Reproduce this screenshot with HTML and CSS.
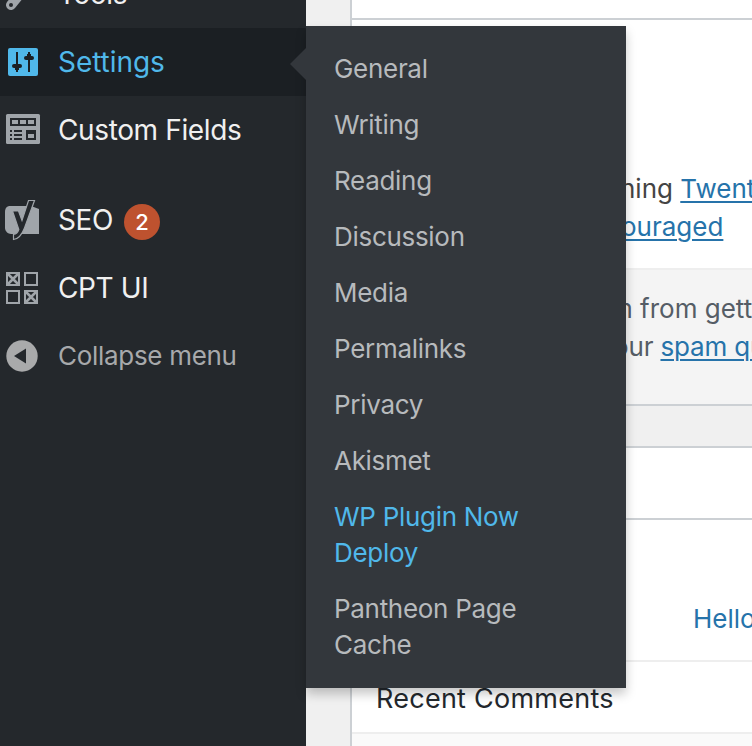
FILE: index.html
```html
<!DOCTYPE html>
<html lang="en">
<head>
<meta charset="utf-8">
<title>Dashboard</title>
<link rel="stylesheet" href="styles.css">
</head>
<body>
<div class="admin">
  <nav class="sidebar">
    <a class="item tools"><svg class="icon" viewBox="0 0 40 40"><path d="M7 28 L17 16 L28 18 L15 34 A5 5 0 1 1 7 28Z" fill="#a0a5aa"/><circle cx="11" cy="31" r="2" fill="#24282c"/></svg><span class="label">Tools</span></a>
    <a class="item current"><svg class="icon" viewBox="0 0 40 40"><rect x="8" y="6" width="30" height="28" rx="2" fill="#50b8ea"/><path d="M17 10V30M29 10V30" stroke="#1b1f23" stroke-width="2"/><rect x="12" y="22" width="10" height="4" rx="2" fill="#1b1f23"/><rect x="24" y="14" width="10" height="4" rx="2" fill="#1b1f23"/><path d="M15 25h4v3h-4zM27 12h4v3h-4z" fill="#1b1f23"/></svg><span class="label">Settings</span></a>
    <a class="item fields"><svg class="icon" viewBox="0 0 40 40"><rect x="6" y="4" width="34" height="30" rx="1.500" fill="#a0a5aa"/><path d="M10 8h26v8H10zM26 20h10v10H26zM10 20h2v2h-2zM10 24h2v2h-2zM10 28h2v2h-2zM14 20h8v2h-8zM14 24h8v2h-8zM14 28h8v2h-8z" fill="#24282c"/><path d="M12 10h6v4h-6zM20 10h6v4h-6zM28 10h6v4h-6zM28 24h6v4h-6z" fill="#a0a5aa"/></svg><span class="label">Custom Fields</span></a>
    <a class="item seo"><svg class="icon" viewBox="0 0 40 40"><path d="M10 6H31L39 9V34H11C8 34 5 31 5 28V12C5 8 7 6 10 6Z" fill="#a0a5aa"/><path d="M12.500 11H18.500L22 20.500L28.500 .5H34.500L24.500 28C21.800 35 19 39 13.500 39.500V34.500C16.500 34 18 32 18.800 29.500Z" fill="#24282c" stroke="#a0a5aa" stroke-width="1.200"/></svg><span class="label">SEO</span><span class="badge">2</span></a>
    <a class="item cpt"><svg class="icon" viewBox="0 0 40 40"><g fill="none" stroke="#a0a5aa" stroke-width="2"><path d="M7 5h12v12H7zM25 5h12v12H25zM7 23h12v12H7zM25 23h12v12H25z"/><path d="M8 6l10 10M18 6L8 16M26 24l10 10M36 24L26 34" stroke-width="2.600"/></g></svg><span class="label">CPT UI</span></a>
    <a class="item collapse"><svg class="icon" viewBox="0 0 40 40"><circle cx="22" cy="20" r="15.700" fill="#a9aaab"/><path d="M26 12.500V27.500L14 20Z" fill="#24282c"/></svg><span class="label">Collapse menu</span></a>
  </nav>

  <main class="content">
    <section class="panel glance">
      <header class="bar"></header>
      <div class="info">
        <p class="running">ning <a>Twenty Twenty</a></p>
        <p class="couraged"><a>ouraged</a></p>
      </div>
      <div class="spam">
        <p class="from">m from getting</p>
        <p class="queue">our <a>spam queue</a></p>
      </div>
    </section>
    <section class="panel activity">
      <header class="title"></header>
      <div class="recent"><a>Hello world!</a></div>
      <h3>Recent Comments</h3>
      <div class="comments"></div>
    </section>
  </main>

  <ul class="submenu">
    <li>General</li>
    <li>Writing</li>
    <li>Reading</li>
    <li>Discussion</li>
    <li>Media</li>
    <li>Permalinks</li>
    <li>Privacy</li>
    <li>Akismet</li>
    <li class="active">WP Plugin Now<br>Deploy</li>
    <li>Pantheon Page<br>Cache</li>
  </ul>
</div>
</body>
</html>
```
FILE: styles.css
```css
* { box-sizing: border-box; }
html, body { margin: 0; height: 746px; overflow: hidden; }
body { font-family: Inter, "Liberation Sans", sans-serif; background: #f0f0f0; }
p, h3, ul { margin: 0; padding: 0; }
.admin { position: relative; display: flex; width: 752px; height: 746px; overflow: hidden; }
.sidebar { flex: 0 0 306px; background: #24282c; color: #f0f0f0; }
.item { display: flex; align-items: center; height: 68px; font-size: 28px; letter-spacing: -.37px; white-space: nowrap; }
.icon { flex: 0 0 40px; width: 40px; height: 40px; margin-right: 18px; overflow: visible; }
.tools { margin-top: -40px; }
.current { background: #1b1f23; color: #50b8ea; letter-spacing: -.05px; }
.seo { margin-top: 22px; }
.collapse { color: #a7a9ab; font-size: 26px; letter-spacing: -.3px; }
.collapse .label { padding-bottom: 2px; }
.badge { width: 36px; height: 36px; margin: 4px 0 0 11px; border-radius: 18px; background: #be522f; color: #fff; font-size: 22px; font-weight: 500; line-height: 36px; letter-spacing: 0; text-align: center; }
.content { flex: 1; min-width: 0; padding-left: 44px; }
.panel { border-left: 2px solid #ccd0d4; background: #fff; white-space: nowrap; overflow: hidden; font-size: 26px; color: #444; }
.panel a { color: #2673aa; }
.panel p a { text-decoration: underline; text-decoration-thickness: 2px; text-underline-offset: 3px; }
.glance { height: 406px; border-bottom: 2px solid #ccd0d4; }
.bar { height: 20px; border-bottom: 2px solid #ccd0d4; }
.info { height: 248px; padding: 150px 0 0 268px; line-height: 38px; }
.couraged { padding-left: 1px; }
.spam { height: 138px; padding: 20px 0 0 258px; border-top: 2px solid #eee; background: #f4f4f4; color: #555d66; line-height: 38px; }
.queue { padding-left: 3px; letter-spacing: -.15px; }
.activity { height: 300px; margin-top: 40px; border-top: 2px solid #ccd0d4; }
.title { height: 72px; border-bottom: 2px solid #ccd0d4; }
.recent { height: 142px; padding: 80px 0 0 341px; border-bottom: 2px solid #eee; line-height: 38px; }
h3 { height: 72px; padding: 18px 24px; border-bottom: 2px solid #eee; color: #23282d; font-size: 27px; font-weight: 400; line-height: 38px; letter-spacing: .25px; }
.comments { height: 12px; background: #fafafa; }
.submenu { position: absolute; left: 306px; top: 26px; width: 320px; height: 662px; padding: 15px 0; background: #33373c; box-shadow: 0 6px 10px rgba(0,0,0,.22); color: #b7babd; font-size: 26px; line-height: 36px; letter-spacing: -.3px; list-style: none; }
.submenu::before { content: ""; position: absolute; left: -16px; top: 22px; border: 16px solid transparent; border-left: 0; border-right-color: #33373c; }
.submenu li { padding: 10px 28px; white-space: nowrap; }
.submenu .active { color: #50b8ea; }
```
